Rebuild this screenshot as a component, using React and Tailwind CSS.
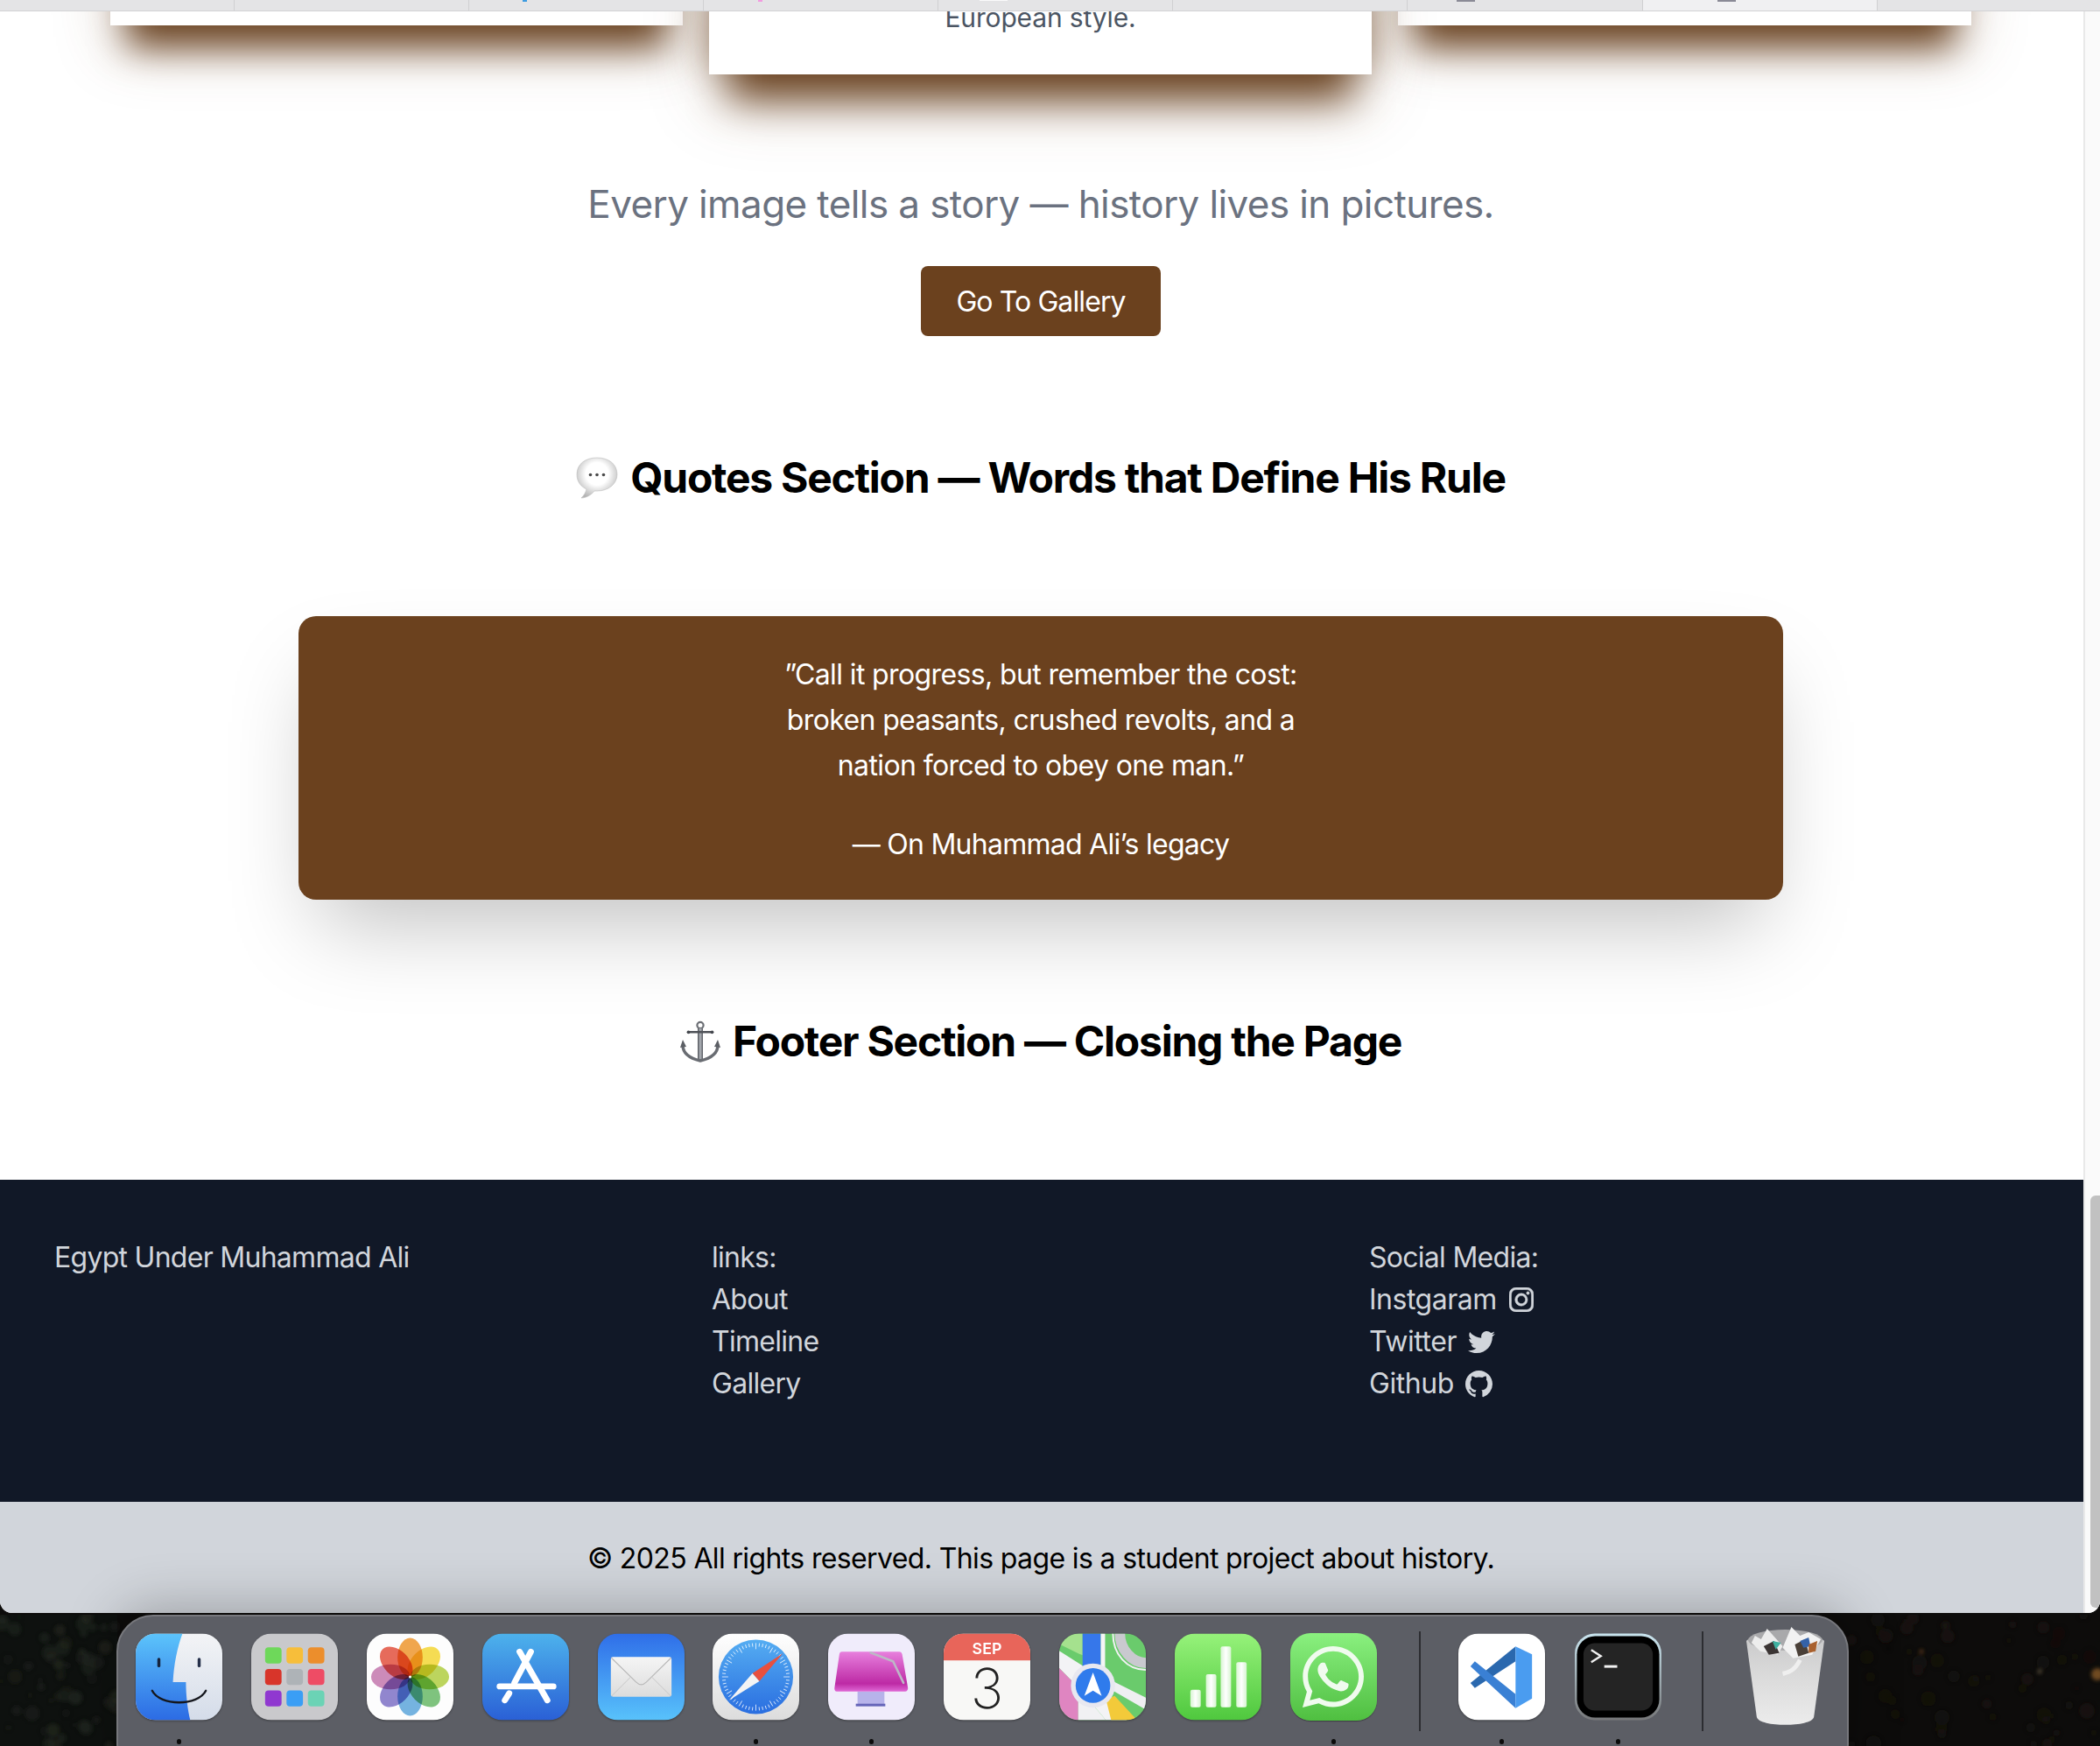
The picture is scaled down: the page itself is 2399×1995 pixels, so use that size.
import React from "react";
import { BsInstagram, BsGithub } from "react-icons/bs";
import { FaTwitter, FaWhatsapp } from "react-icons/fa";

function Tile({ children, dot, className = "" }) {
  return (
    <div className={`relative w-[99px] h-[100px] shrink-0 ${className}`}>
      {children}
      {dot && <div className="absolute left-[47px] top-[121px] w-[5px] h-[6px] rounded-full bg-[#0b0b0b]" />}
    </div>
  );
}

function Svg({ id, children }) {
  return (
    <svg viewBox="0 0 100 100" className="w-full h-full block drop-shadow-[0_1px_1px_rgba(0,0,0,0.35)]">
      <defs>
        <clipPath id={id}><rect width="100" height="100" rx="23" /></clipPath>
      </defs>
      <g clipPath={`url(#${id})`}>{children}</g>
    </svg>
  );
}

const Finder = () => (
  <Svg id="c1">
    <defs>
      <linearGradient id="f1" x1="0" y1="0" x2="0" y2="1"><stop offset="0" stopColor="#5cc4fb" /><stop offset="1" stopColor="#2c6be4" /></linearGradient>
      <linearGradient id="f2" x1="0" y1="0" x2="0" y2="1"><stop offset="0" stopColor="#f3f4f6" /><stop offset="1" stopColor="#d4dce9" /></linearGradient>
    </defs>
    <rect width="100" height="100" fill="url(#f2)" />
    <path d="M0 0H54C48 16 44 36 43 56H58C58 72 60 88 63 100H0Z" fill="url(#f1)" />
    <rect x="25" y="28" width="3.5" height="11" rx="1.7" fill="#16233c" />
    <rect x="71.5" y="28" width="3.5" height="11" rx="1.7" fill="#25304a" />
    <path d="M19 66C28 84 72 84 81 66" fill="none" stroke="#15171d" strokeWidth="2.4" strokeLinecap="round" />
  </Svg>
);

const Launchpad = () => {
  const cells = ["#6ed85a", "#f7be3a", "#ec8e2c", "#d8352a", "#aeb3b7", "#ee4c65", "#9038d0", "#3a9ef5", "#6bd3b5"];
  return (
    <Svg id="c2">
      <rect width="100" height="100" fill="#c9c9cc" />
      {cells.map((c, i) => (
        <rect key={i} x={16 + (i % 3) * 24.7} y={16 + Math.floor(i / 3) * 24.8} width="19" height="18.5" rx="4" fill={c} />
      ))}
    </Svg>
  );
};

const Photos = () => {
  const petals = ["#f0982f", "#f6d934", "#b3d043", "#6abb68", "#5ea8dd", "#7f72c8", "#c678af", "#e4523f"];
  return (
    <Svg id="c3">
      <rect width="100" height="100" fill="#fdfdfd" />
      {petals.map((c, i) => (
        <ellipse key={i} cx="50" cy="27.5" rx="14.5" ry="22.5" fill={c} opacity="0.85" transform={`rotate(${i * 45} 50 50)`} style={{ mixBlendMode: "multiply" }} />
      ))}
      <circle cx="50" cy="50" r="1.6" fill="#fff" />
    </Svg>
  );
};

const AppStore = () => (
  <Svg id="c4">
    <defs>
      <linearGradient id="a1" x1="0" y1="0" x2="0" y2="1"><stop offset="0" stopColor="#4db2ec" /><stop offset="1" stopColor="#2a60d6" /></linearGradient>
    </defs>
    <rect width="100" height="100" fill="url(#a1)" />
    <g stroke="#fff" strokeWidth="7" strokeLinecap="round" fill="none">
      <path d="M56 21L37 57" />
      <path d="M31 69L26 77" />
      <path d="M43 21L75 77" />
      <path d="M20 61H82" />
    </g>
  </Svg>
);

const Mail = () => (
  <Svg id="c5">
    <defs>
      <linearGradient id="m1" x1="0" y1="0" x2="0" y2="1"><stop offset="0" stopColor="#2f6ee8" /><stop offset="1" stopColor="#58c2fb" /></linearGradient>
      <linearGradient id="m2" x1="0" y1="0" x2="0" y2="1"><stop offset="0" stopColor="#f5f5f5" /><stop offset="1" stopColor="#dcdcdc" /></linearGradient>
    </defs>
    <rect width="100" height="100" fill="url(#m1)" />
    <rect x="15" y="27" width="70" height="46" rx="2.5" fill="url(#m2)" />
    <path d="M15.5 28L44 56C48 60 52 60 56 56L84.5 28" fill="none" stroke="#b9b9b9" strokeWidth="1.2" />
    <path d="M16 72L38 50M84 72L62 50" fill="none" stroke="#c6c6c6" strokeWidth="1" />
  </Svg>
);

const Safari = () => {
  const ticks = Array.from({ length: 60 }, (_, i) => i * 6);
  return (
    <Svg id="c6">
      <defs>
        <linearGradient id="s1" x1="0" y1="0" x2="0" y2="1"><stop offset="0" stopColor="#ffffff" /><stop offset="1" stopColor="#dcdcdc" /></linearGradient>
        <linearGradient id="s2" x1="0" y1="0" x2="0" y2="1"><stop offset="0" stopColor="#55adf2" /><stop offset="1" stopColor="#2a6ee0" /></linearGradient>
      </defs>
      <rect width="100" height="100" fill="url(#s1)" />
      <circle cx="50" cy="50" r="43" fill="url(#s2)" />
      {ticks.map((a) => (
        <line key={a} x1="50" y1="11" x2="50" y2={a % 30 === 0 ? 18 : 15} stroke="#fff" strokeWidth="0.9" opacity="0.85" transform={`rotate(${a} 50 50)`} />
      ))}
      <polygon points="81,23 54,55 46,46" fill="#e8503f" />
      <polygon points="19,77 54,55 46,46" fill="#f4f4f4" />
    </Svg>
  );
};

const CleanMyMac = () => (
  <Svg id="c7">
    <defs>
      <linearGradient id="cm" x1="0" y1="0" x2="0" y2="1"><stop offset="0" stopColor="#e77fdd" /><stop offset="0.8" stopColor="#bd2aa5" /><stop offset="1" stopColor="#e069d6" /></linearGradient>
    </defs>
    <rect width="100" height="100" fill="#f0ecfb" />
    <rect x="34" y="67" width="31" height="15" fill="#b7b3ea" />
    <rect x="32" y="81" width="34" height="3" fill="#6565b8" />
    <path d="M16 21H82C84 21 85 22 85.5 24L92 62C92.5 65 91 67 88 67H11C8 67 7 65 7.5 62L13 24C13.5 22 14 21 16 21Z" fill="url(#cm)" />
    <path d="M49 22L75 32L87 57" fill="none" stroke="#bdb7c6" strokeWidth="2.6" strokeLinecap="round" />
  </Svg>
);

const Calendar = () => (
  <Svg id="c8">
    <rect width="100" height="100" fill="#f8f8f6" />
    <rect width="100" height="31" fill="#e8655a" />
    <text x="50" y="24" textAnchor="middle" fontFamily="Inter, sans-serif" fontWeight="600" fontSize="18" fill="#fff">SEP</text>
    <text x="50" y="86" textAnchor="middle" fontFamily="Inter, sans-serif" fontWeight="200" fontSize="64" fill="#222">3</text>
  </Svg>
);

const Maps = () => (
  <Svg id="c9">
    <rect width="100" height="100" fill="#6acb6c" />
    <polygon points="0,0 27,0 27,25 22,23 0,12" fill="#a5e18e" />
    <polygon points="0,20 27,37 50,60 78,100 54,100 22,62 0,40" fill="#f3f3f5" />
    <polygon points="0,40 22,62 22,100 0,100" fill="#df85c1" />
    <polygon points="22,62 54,100 22,100" fill="#f1f1f3" />
    <polygon points="54,76 64,72 90,100 60,100" fill="#f3ca3a" />
    <polygon points="52,50 100,74 100,88 62,66" fill="#efeff2" />
    <rect x="27" y="0" width="21" height="42" fill="#3677ea" />
    <rect x="48" y="0" width="5" height="50" fill="#f5f5f5" />
    <path d="M70 0C70 18 84 34 100 34" fill="none" stroke="#c9c9cf" strokeWidth="12" />
    <path d="M62 0C62 24 78 42 100 42" fill="none" stroke="#f2f2f4" strokeWidth="2" />
    <circle cx="39" cy="60" r="25.5" fill="#e8e8f0" />
    <circle cx="39" cy="60" r="20" fill="#2f7bec" />
    <polygon points="39,45 49,72 39,66 29,72" fill="#fff" />
  </Svg>
);

const Numbers = () => (
  <Svg id="c10">
    <defs>
      <linearGradient id="n1" x1="0" y1="0" x2="0" y2="1"><stop offset="0" stopColor="#96f27a" /><stop offset="1" stopColor="#4fc83e" /></linearGradient>
      <linearGradient id="n2" x1="0" y1="0" x2="1" y2="0"><stop offset="0" stopColor="#d8f4d2" /><stop offset="0.5" stopColor="#ffffff" /><stop offset="1" stopColor="#d8f4d2" /></linearGradient>
    </defs>
    <rect width="100" height="100" fill="url(#n1)" />
    <rect x="18" y="65" width="12" height="20" rx="2" fill="url(#n2)" />
    <rect x="36" y="47" width="12" height="38" rx="2" fill="url(#n2)" />
    <rect x="53" y="15" width="12" height="70" rx="2" fill="url(#n2)" />
    <rect x="71" y="33" width="12" height="52" rx="2" fill="url(#n2)" />
  </Svg>
);

const WhatsApp = () => (
  <div className="w-full h-full rounded-[23px] bg-linear-to-b from-[#8af07f] to-[#4fbf40] flex items-center justify-center shadow-[0_1px_1px_rgba(0,0,0,0.35)]">
    <FaWhatsapp className="text-[#f0fbee] w-[80px] h-[80px]" />
  </div>
);

const VSCode = () => (
  <Svg id="c12">
    <rect width="100" height="100" fill="#fff" />
    <polygon points="66,15 14,57 19,63 66,32" fill="#2a68ae" />
    <polygon points="14,38 19,32 66,70 66,86" fill="#3a80d4" />
    <polygon points="66,15 85,24 85,75 66,86" fill="#4a9cf0" />
  </Svg>
);

const Terminal = () => (
  <svg viewBox="0 0 100 100" className="w-full h-full block">
    <defs>
      <linearGradient id="t1" x1="0" y1="0" x2="0" y2="1"><stop offset="0" stopColor="#c9e5ef" /><stop offset="1" stopColor="#77787a" /></linearGradient>
    </defs>
    <rect width="100" height="100" rx="23" fill="url(#t1)" />
    <rect x="2.5" y="3" width="95" height="94" rx="21" fill="#000" />
    <rect x="10" y="11" width="80" height="78" rx="13" fill="#242424" />
    <path d="M19 19L30 26L19 33" fill="none" stroke="#f2f2f2" strokeWidth="2.4" />
    <path d="M34 38H49" stroke="#f2f2f2" strokeWidth="3" />
  </svg>
);

const Trash = () => (
  <svg viewBox="0 0 90 116" className="w-[89px] h-[115px] block absolute left-[5px] top-[-9px]">
    <defs>
      <linearGradient id="tr" x1="0" y1="0" x2="0" y2="1"><stop offset="0" stopColor="#c9c9ca" /><stop offset="0.45" stopColor="#dadada" /><stop offset="1" stopColor="#ececec" /></linearGradient>
    </defs>
    <path d="M0 18C8 9 82 9 90 18L78 106C75 118 15 118 12 106Z" fill="url(#tr)" />
    <ellipse cx="45" cy="17" rx="43" ry="12" fill="#a9a9ab" />
    <polygon points="6,20 10,12 17,16 24,4 33,14 42,24 36,34 16,30" fill="#ededed" />
    <polygon points="20,24 32,18 38,32 26,34" fill="#3b3534" />
    <polygon points="30,18 40,20 34,28" fill="#3fb0a0" />
    <polygon points="42,26 52,2 62,12 72,8 86,16 76,34 54,38" fill="#f2f2f2" />
    <polygon points="56,22 68,16 72,32 60,36" fill="#4a4038" />
    <polygon points="62,18 72,14 74,24 66,26" fill="#3462a8" />
    <polygon points="72,22 82,18 80,30 72,32" fill="#a9612f" />
    <path d="M62 40C56 52 50 54 42 56" stroke="#efefef" strokeWidth="5" fill="none" />
  </svg>
);

function Wallpaper() {
  let s = 11;
  const rnd = () => { s = (s * 16807) % 2147483647; return s / 2147483647; };
  const blobs = Array.from({ length: 120 }, () => {
    const left = rnd() < 0.5;
    const x = left ? rnd() * 134 : 2112 + rnd() * 287;
    const y = rnd() * 150;
    return { x, y, r: 2 + rnd() * 7, c: left ? "#262b23" : "#1c1710", k: rnd() };
  });
  return (
    <svg className="absolute inset-0 w-full h-full" viewBox="0 0 2399 152" preserveAspectRatio="none">
      <defs>
        <filter id="wb"><feGaussianBlur stdDeviation="2" /></filter>
      </defs>
      <rect x="0" y="0" width="134" height="152" fill="#0e110f" />
      <g filter="url(#wb)">
        {blobs.map((d, i) => (
          <circle key={i} cx={d.x} cy={d.y} r={d.r} fill={d.c} opacity={0.2 + d.k * 0.4} />
        ))}
        <circle cx="2396" cy="68" r="7" fill="#8a5a28" opacity="0.8" />
        <circle cx="2330" cy="65" r="2" fill="#7a6a50" />
        <circle cx="2195" cy="42" r="2" fill="#7a4a20" />
      </g>
    </svg>
  );
}

function Dock() {
  return (
    <div className="relative z-20 ml-[133px] mt-[2px] w-[1979px] h-[190px] rounded-[42px] bg-[#5c5e65] border-2 border-[#77787d] pl-[20px] pt-[19px] flex items-start shadow-[0_-8px_60px_rgba(0,0,0,0.25)]">
      <div className="flex gap-[32.9px]">
        <Tile dot><Finder /></Tile>
        <Tile><Launchpad /></Tile>
        <Tile><Photos /></Tile>
        <Tile><AppStore /></Tile>
        <Tile><Mail /></Tile>
        <Tile dot><Safari /></Tile>
        <Tile dot><CleanMyMac /></Tile>
        <Tile><Calendar /></Tile>
        <Tile><Maps /></Tile>
        <Tile><Numbers /></Tile>
        <Tile dot><WhatsApp /></Tile>
      </div>
      <div className="ml-[48px] mt-[-2px] w-[2px] h-[114px] bg-[#2c2d31]" />
      <div className="ml-[43px] flex gap-[34px]">
        <Tile dot><VSCode /></Tile>
        <Tile dot><Terminal /></Tile>
      </div>
      <div className="ml-[46px] mt-[-2px] w-[2px] h-[114px] bg-[#2c2d31]" />
      <Tile className="ml-[44px]"><Trash /></Tile>
    </div>
  );
}

function TabBar() {
  return (
    <div className="relative z-10 h-[13px] shrink-0 flex bg-[#e4e4e6] border-b border-[#d2d2d4] overflow-hidden">
      <div className="w-[268px] h-full border-r border-[#d0d0d2]" />
      <div className="w-[268px] h-full border-r border-[#d0d0d2]" />
      <div className="w-[268px] h-full border-r border-[#d0d0d2] relative"><span className="absolute left-[61px] top-0 w-[5px] h-[2px] bg-[#3d9be0]" /></div>
      <div className="w-[268px] h-full border-r border-[#d0d0d2] relative"><span className="absolute left-[62px] top-0 w-[5px] h-[2px] bg-[#f29be0]" /></div>
      <div className="w-[268px] h-full border-r border-[#d0d0d2] relative"><span className="absolute left-[47px] top-0 w-[32px] h-[1px] bg-[#fafafa]" /></div>
      <div className="w-[268px] h-full border-r border-[#d0d0d2]" />
      <div className="w-[269px] h-full border-r border-[#d0d0d2] relative"><span className="absolute left-[56px] top-0 w-[21px] h-[2px] bg-[#8a8a96]" /></div>
      <div className="w-[268px] h-full border-r border-[#d0d0d2] bg-[#f0f0f2] relative"><span className="absolute left-[85px] top-0 w-[21px] h-[2px] bg-[#8a8a96]" /></div>
    </div>
  );
}

function Heading({ icon, children }) {
  return (
    <h2 className="flex items-center justify-center gap-[14px] text-[48px] leading-[72px] font-bold text-black tracking-[-1.25px]">
      {icon}
      <span>{children}</span>
    </h2>
  );
}

const Balloon = () => (
  <svg viewBox="0 0 48 48" className="w-[48px] h-[48px] shrink-0">
    <defs>
      <radialGradient id="b1" cx="0.5" cy="0.4" r="0.62"><stop offset="0.45" stopColor="#ffffff" /><stop offset="1" stopColor="#b4b4b4" /></radialGradient>
    </defs>
    <path d="M24 1C11 1 1 8 1 20C1 29 6 34 12 37C11 41 9 44 6 47C12 47 18 43 21 39C22 39 23 39 24 39C37 39 47 31 47 20C47 8 37 1 24 1Z" fill="url(#b1)" stroke="#bdbdbd" strokeWidth="0.6" />
    <circle cx="16.5" cy="20.5" r="1.8" fill="#4a4a4a" />
    <circle cx="24" cy="20.5" r="1.8" fill="#4a4a4a" />
    <circle cx="31.5" cy="20.5" r="1.8" fill="#4a4a4a" />
  </svg>
);

const Anchor = () => (
  <svg viewBox="0 0 46 48" className="w-[46px] h-[48px] shrink-0">
    <defs>
      <linearGradient id="an" x1="0" y1="0" x2="1" y2="0"><stop offset="0" stopColor="#4c4f55" /><stop offset="0.5" stopColor="#b4b8be" /><stop offset="1" stopColor="#55585e" /></linearGradient>
    </defs>
    <circle cx="23" cy="5.5" r="3.6" fill="none" stroke="#6c6f75" strokeWidth="2.2" />
    <rect x="20" y="9" width="6" height="36" fill="url(#an)" />
    <rect x="9" y="12" width="28" height="2.6" rx="1.3" fill="#4f5258" />
    <circle cx="9.5" cy="13.3" r="1.9" fill="#44474d" />
    <circle cx="36.5" cy="13.3" r="1.9" fill="#44474d" />
    <path d="M3 28C3 40 14 44 23 46C32 44 43 40 43 28" fill="none" stroke="#696c72" strokeWidth="3.4" />
    <polygon points="3,22 0,31 7,30" fill="#5c5f65" />
    <polygon points="43,22 39,30 46,31" fill="#5c5f65" />
  </svg>
);

function Footer() {
  return (
    <footer>
      <div className="bg-[#111827] text-[#d1d5db] pl-[62px] pt-[65px] pb-[111px] text-[32px] leading-[48px] tracking-[-0.72px] grid grid-cols-[751px_751px_751px]">
        <div>Egypt Under Muhammad Ali</div>
        <div>
          <div>links:</div>
          <div>About</div>
          <div>Timeline</div>
          <div>Gallery</div>
        </div>
        <div>
          <div>Social Media:</div>
          <div className="flex items-center gap-[14px] tracking-[-0.5px]">Instgaram <BsInstagram className="w-[28px] h-[28px] stroke-[0.3]" /></div>
          <div className="flex items-center gap-[13px] tracking-[-0.45px]">Twitter <FaTwitter className="w-[31px] h-[31px]" /></div>
          <div className="flex items-center gap-[13px] tracking-[-0.45px]">Github <BsGithub className="w-[31px] h-[31px]" /></div>
        </div>
      </div>
      <div className="bg-[#d1d5db] text-black text-center text-[32px] leading-[48px] tracking-[-0.63px] pt-[41px] pb-[38px] pr-[2px]">
        © 2025 All rights reserved. This page is a student project about history.
      </div>
    </footer>
  );
}

export default function App() {
  return (
    <div className="relative w-[2399px] h-[1995px] overflow-hidden bg-[#0d0c0b] font-[Inter,sans-serif]">
      <div className="relative h-[1843px] flex flex-col rounded-b-[14px] overflow-hidden bg-white">
        <TabBar />
        <div className="flex-1 flex min-h-0">
          <main className="w-[2380px] shrink-0 flex flex-col overflow-hidden">
            <div className="pr-[2px]">
              <div className="flex items-start justify-center gap-[30px] h-[72px]">
                <div className="-mt-[100px] w-[654px] h-[116px] bg-white shadow-[0_44px_40px_-20px_#6b4423,0_30px_70px_-6px_rgba(107,68,35,0.28)]" />
                <div className="relative z-[1] -mt-[100px] w-[757px] h-[172px] bg-white flex flex-col justify-end text-center shadow-[0_50px_46px_-22px_#6b4423,0_36px_80px_-8px_rgba(107,68,35,0.26),0_-20px_36px_10px_rgba(107,68,35,0.3)]">
                  <p className="mb-[41px] text-[30px] leading-[48px] tracking-[-0.15px] text-[#4b5563]">European style.</p>
                </div>
                <div className="-mt-[100px] w-[655px] h-[116px] bg-white shadow-[0_44px_40px_-20px_#6b4423,0_30px_70px_-6px_rgba(107,68,35,0.28)]" />
              </div>
              <p className="mt-[120px] text-center text-[44px] leading-[56px] tracking-[-0.6px] text-[#6b7280]">Every image tells a story — history lives in pictures.</p>
              <div className="mt-[43px] flex justify-center">
                <div className="w-[274px] h-[80px] pt-[2px] rounded-[8px] bg-[#6b411e] text-white text-[32px] tracking-[-0.9px] flex items-center justify-center">Go To Gallery</div>
              </div>
              <div className="mt-[126px]"><Heading icon={<Balloon />}>Quotes Section — Words that Define His Rule</Heading></div>
              <div className="mt-[122px] mx-auto w-[1696px] h-[324px] rounded-[20px] bg-[#6b411e] text-white text-center text-[32px] leading-[52px] tracking-[-0.62px] pt-[41px] shadow-[0_50px_100px_-24px_rgba(0,0,0,0.25)]">
                <p>”Call it progress, but remember the cost:<br />broken peasants, crushed revolts, and a<br />nation forced to obey one man.”</p>
                <p className="mt-[38px] tracking-[-0.74px]">— On Muhammad Ali’s legacy</p>
              </div>
              <div className="mt-[126px]"><Heading icon={<Anchor />}>Footer Section — Closing the Page</Heading></div>
            </div>
            <div className="mt-[122px]"><Footer /></div>
          </main>
          <div className="flex-1 bg-[#fafafa] border-l-2 border-[#e9e9e9] pl-[6px] pt-[1353px]">
            <div className="w-[11px] h-[471px] rounded-l-[6px] bg-[#c1c1c1]" />
          </div>
        </div>
      </div>
      <div className="relative h-[152px]">
        <Wallpaper />
        <Dock />
      </div>
    </div>
  );
}
